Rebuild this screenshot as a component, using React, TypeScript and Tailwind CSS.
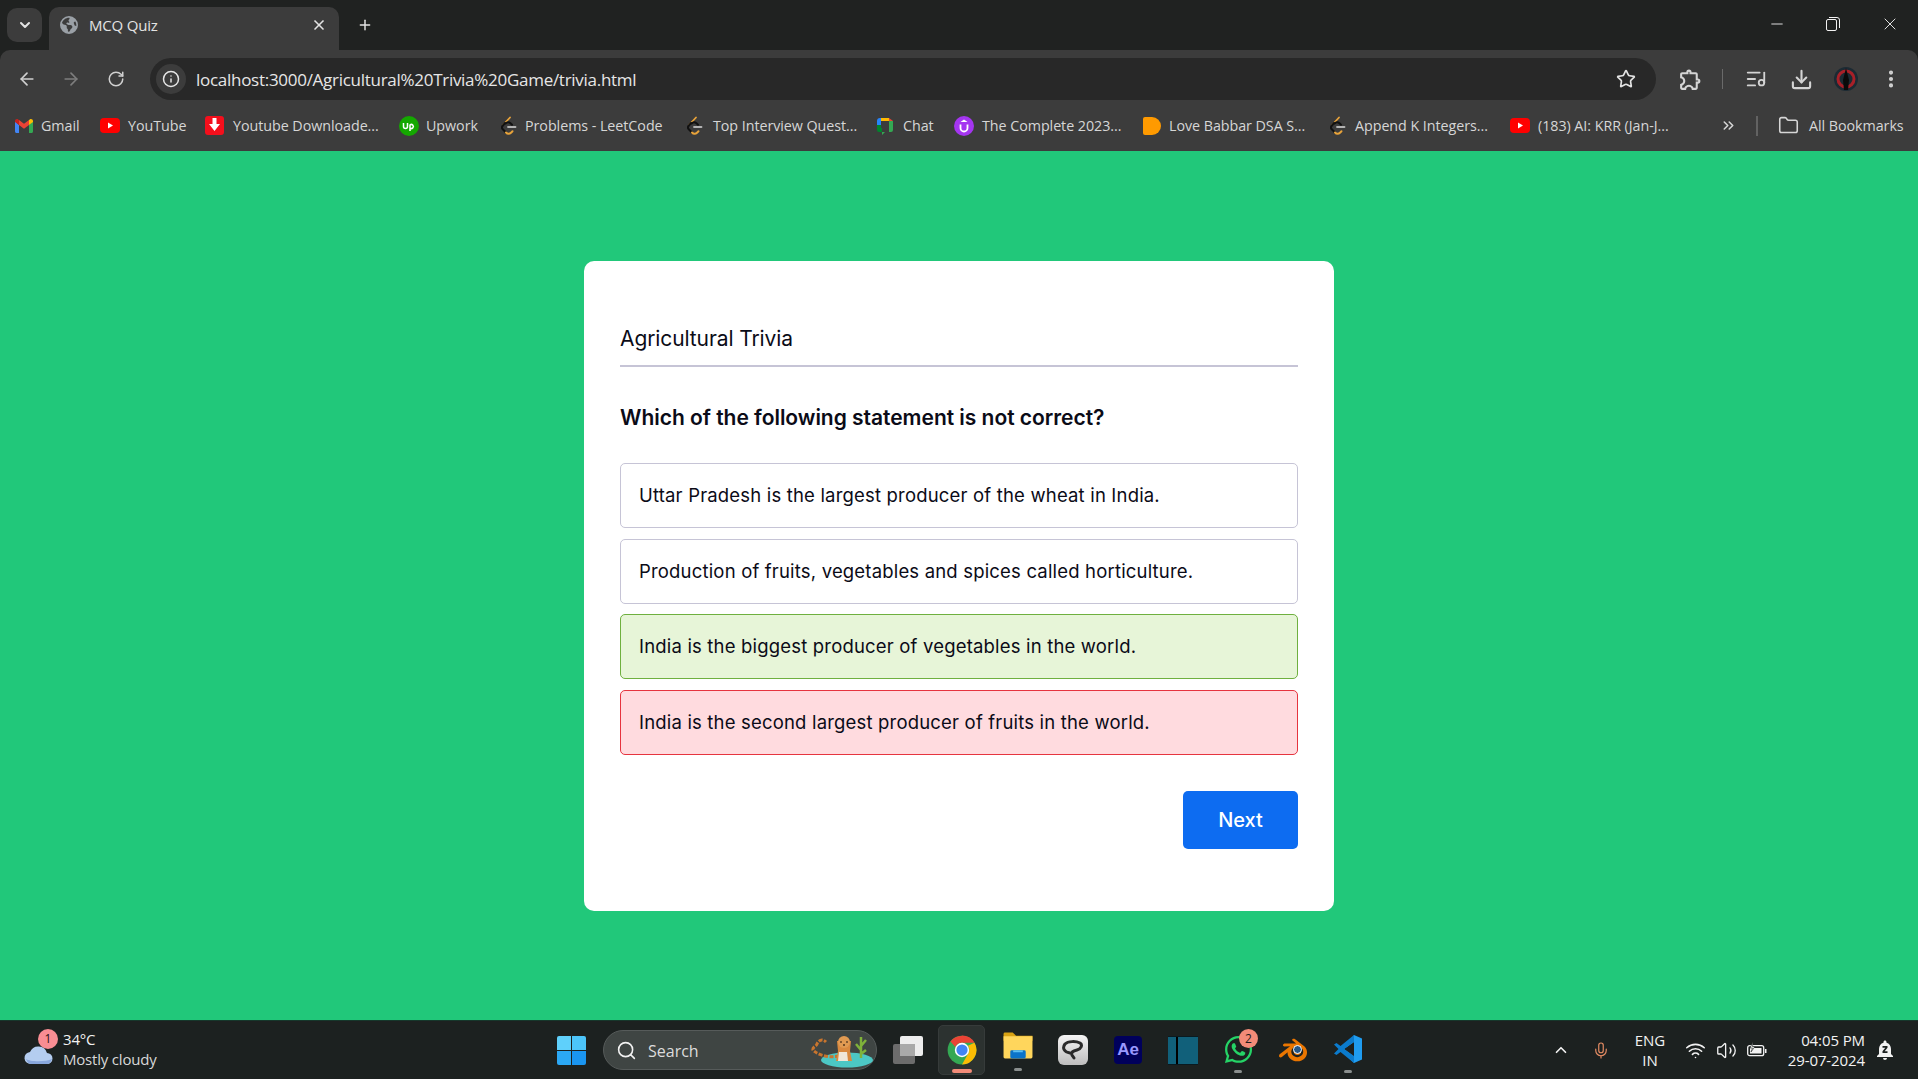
import {
  ArrowLeft,
  ArrowRight,
  ChevronDown,
  ChevronUp,
  ChevronsRight,
  Download,
  EllipsisVertical,
  Folder,
  Info,
  ListMusic,
  Mic,
  Minus,
  Plus,
  RotateCw,
  Search,
  Star,
  Volume2,
  Wifi,
  X,
} from "lucide-react";
import { FaWhatsapp } from "react-icons/fa";
import { FaEarthAmericas } from "react-icons/fa6";
import { MdNotificationsPaused, MdOutlineExtension } from "react-icons/md";
import { SiBlender } from "react-icons/si";

const chromeFont = "font-['Open_Sans','Noto_Sans',sans-serif]";

function GmailIcon() {
  return (
    <svg width="18" height="14" viewBox="0 0 18 14">
      <path d="M0 2v10.5C0 13.3.7 14 1.5 14H4V6z" fill="#4285f4" />
      <path d="M18 2v10.5c0 .8-.7 1.5-1.5 1.5H14V6z" fill="#34a853" />
      <path d="M14 1v5l4-3V2c0-1.800-2-2.500-3.200-1.600z" fill="#fbbc04" />
      <path d="M4 6V1l5 3.800L14 1v5l-5 3.800z" fill="#ea4335" />
      <path d="M0 2v1l4 3V1L3.200.4C2 -.5 0 .2 0 2z" fill="#c5221f" />
    </svg>
  );
}

function YoutubeIcon() {
  return (
    <svg width="20" height="15" viewBox="0 0 20 15">
      <rect width="20" height="15" rx="4" fill="#ff0000" />
      <path d="M8 4.500v6l5-3z" fill="#fff" />
    </svg>
  );
}

function DownloaderIcon() {
  return (
    <svg width="19" height="19" viewBox="0 0 19 19">
      <rect width="19" height="19" rx="3" fill="#f40f1c" />
      <path d="M7.500 2h4v6H15l-5.500 7L4 8h3.500z" fill="#fff" />
    </svg>
  );
}

function UpworkIcon() {
  return (
    <svg width="20" height="20" viewBox="0 0 20 20">
      <circle cx="10" cy="10" r="10" fill="#14a800" />
      <path d="M4.500 7v3.500a2 2 0 0 0 4 0V7M11 15V9a2 2 0 1 1 0 3" fill="none" stroke="#fff" strokeWidth="1.500" />
    </svg>
  );
}

function LeetcodeIcon() {
  return (
    <svg width="16" height="20" viewBox="0 0 16 20">
      <path d="M9 1.500 2 9" fill="none" stroke="#e8a33a" strokeWidth="1.800" strokeLinecap="round" />
      <path d="M4 7 1.500 10c-.8 1 -.8 2 0 3l3.500 3.500" fill="none" stroke="#111" strokeWidth="2" strokeLinecap="round" />
      <path d="M5 16.500c1.500 1.700 3.500 1.700 5 .2l1.500-1.500" fill="none" stroke="#e8a33a" strokeWidth="2" strokeLinecap="round" />
      <path d="M7 11h7.500" stroke="#b3b3b3" strokeWidth="1.800" strokeLinecap="round" />
      <path d="M4.500 7.500c1.500-1.500 3.500-1.500 5-.2l1.500 1.400" fill="none" stroke="#111" strokeWidth="2" strokeLinecap="round" />
    </svg>
  );
}

function ChatIcon() {
  return (
    <svg width="16" height="18" viewBox="0 0 16 18">
      <path d="M0 4h4v4.500L0 8z" fill="#2684fc" />
      <path d="M0 4a3 3 0 0 1 3-3h1v3z" fill="#2684fc" />
      <path d="M4 1h8v3H4z" fill="#ffba00" />
      <path d="M12 1l4 3h-4z" fill="#ea4335" />
      <path d="M12 4h4v9a2 2 0 0 1-2 2H8l-3 3v-3h7z" fill="#34a853" />
      <path d="M0 8h4v3h1v4H2a2 2 0 0 1-2-2z" fill="#00832d" />
    </svg>
  );
}

function UdemyIcon() {
  return (
    <svg width="20" height="20" viewBox="0 0 20 20">
      <circle cx="10" cy="10" r="10" fill="#a435f0" />
      <path d="M6.500 8.500V12a3.500 3.500 0 0 0 7 0V8.500" fill="none" stroke="#fff" strokeWidth="1.800" />
      <path d="M10 3.500 6.500 6h7z" fill="#fff" />
    </svg>
  );
}

function BabbarIcon() {
  return (
    <svg width="18" height="18" viewBox="0 0 18 18">
      <path d="M0 2a2 2 0 0 1 2-2h7a9 9 0 0 1 0 18H2a2 2 0 0 1-2-2z" fill="#ff9a00" />
    </svg>
  );
}

const bookmarks = [
  { icon: <GmailIcon />, label: "Gmail", box: "w-[18px] ml-[15px]", text: "w-[39px] ml-[8px]" },
  { icon: <YoutubeIcon />, label: "YouTube", box: "w-[20px] ml-[20px]", text: "w-[57px] ml-[8px]" },
  { icon: <DownloaderIcon />, label: "Youtube Downloade...", box: "w-[19px] ml-[20px]", text: "w-[146px] ml-[9px]" },
  { icon: <UpworkIcon />, label: "Upwork", box: "w-[20px] ml-[20px]", text: "w-[53px] ml-[7px]" },
  { icon: <LeetcodeIcon />, label: "Problems - LeetCode", box: "w-[16px] ml-[22px]", text: "w-[140px] ml-[8px]" },
  { icon: <LeetcodeIcon />, label: "Top Interview Quest...", box: "w-[16px] ml-[22px]", text: "w-[142px] ml-[10px]" },
  { icon: <ChatIcon />, label: "Chat", box: "w-[16px] ml-[22px]", text: "w-[31px] ml-[10px]" },
  { icon: <UdemyIcon />, label: "The Complete 2023...", box: "w-[20px] ml-[20px]", text: "w-[141px] ml-[8px]" },
  { icon: <BabbarIcon />, label: "Love Babbar DSA S...", box: "w-[18px] ml-[20px]", text: "w-[137px] ml-[8px]" },
  { icon: <LeetcodeIcon />, label: "Append K Integers...", box: "w-[16px] ml-[24px]", text: "w-[135px] ml-[9px]" },
  { icon: <YoutubeIcon />, label: "(183) AI: KRR (Jan-J...", box: "w-[20px] ml-[20px]", text: "w-[138px] ml-[8px]" },
];

const options = [
  { label: "Uttar Pradesh is the largest producer of the wheat in India.", style: "bg-white border-[#c6c4d6]", gap: "mt-[29px]" },
  { label: "Production of fruits, vegetables and spices called horticulture.", style: "bg-white border-[#c6c4d6]", gap: "mt-[11px]" },
  { label: "India is the biggest producer of vegetables in the world.", style: "bg-[#e7f5d8] border-[#6fb03f]", gap: "mt-[10px]" },
  { label: "India is the second largest producer of fruits in the world.", style: "bg-[#ffdbdf] border-[#e6343f]", gap: "mt-[11px]" },
];

function TabStrip() {
  return (
    <div className="h-[50px] flex items-end pl-[7px] shrink-0">
      <div className="h-[34px] w-[35px] mb-[8px] rounded-[10px] bg-[#3c3c3c] flex items-center justify-center">
        <ChevronDown size={16} strokeWidth={3} color="#e3e3e3" />
      </div>
      <div className="h-[43px] w-[290px] ml-[7px] rounded-t-[10px] bg-[#3c3c3c] flex items-center pl-[11px] pr-[12px] pb-[7px]">
        <FaEarthAmericas size={18} color="#9aa0a6" />
        <span className={`${chromeFont} ml-[11px] text-[15px] text-[#e3e3e3] tracking-[-0.2px] flex-1`}>MCQ Quiz</span>
        <X size={16} strokeWidth={2.500} color="#e3e3e3" />
      </div>
      <div className="h-[50px] ml-[18px] w-[16px] flex items-center justify-center">
        <Plus size={18} strokeWidth={2.200} color="#e3e3e3" />
      </div>
      <div className="flex-1" />
      <div className="h-[50px] flex items-center pb-[2px] pr-[18px]">
        <Minus size={18} strokeWidth={1.200} color="#f2f2f2" />
        <svg className="ml-[40px]" width="14" height="14" viewBox="0 0 14 14" fill="none" stroke="#f2f2f2" strokeWidth="1">
          <rect x="0.500" y="2.500" width="10" height="11" rx="1.500" />
          <path d="M3 .5h8a2.500 2.500 0 0 1 2.500 2.500v8" />
        </svg>
        <X className="ml-[40px]" size={20} strokeWidth={1.100} color="#f2f2f2" />
      </div>
    </div>
  );
}

function Toolbar() {
  return (
    <div className="h-[50px] bg-[#3c3c3c] rounded-t-[10px] flex items-end shrink-0">
      <div className="h-[42px] flex items-center pl-[17px] w-[150px] shrink-0">
        <ArrowLeft size={20} color="#d0d0d0" strokeWidth={2} />
        <ArrowRight className="ml-[24px]" size={20} color="#7d7d7d" strokeWidth={2} />
        <RotateCw className="ml-[26px]" size={18} color="#d0d0d0" strokeWidth={2} />
      </div>
      <div className="h-[42px] w-[1506px] rounded-full bg-[#282828] flex items-center pl-[6px] pr-[20px] shrink-0">
        <div className="h-[30px] w-[30px] rounded-full bg-[#3c3c3c] flex items-center justify-center">
          <Info size={18} color="#e6e6e6" strokeWidth={2} />
        </div>
        <span className={`${chromeFont} ml-[10px] pt-[1px] text-[17px] text-[#e6e6e6] tracking-[-0.28px] flex-1`}>
          localhost:3000/Agricultural%20Trivia%20Game/trivia.html
        </span>
        <Star size={20} color="#e3e3e3" strokeWidth={2} />
      </div>
      <div className="h-[42px] flex items-center pl-[22px]">
        <MdOutlineExtension size={25} color="#d4d4d4" />
        <div className="ml-[19px] h-[20px] w-[1px] bg-[#6a6a6a]" />
        <ListMusic className="ml-[22px]" size={22} color="#d4d4d4" strokeWidth={2} />
        <Download className="ml-[23px]" size={23} color="#d4d4d4" strokeWidth={2.200} />
        <div className="ml-[21px] h-[24px] w-[24px] rounded-full bg-[#1c2a33] flex items-center justify-center overflow-hidden">
          <svg width="24" height="24" viewBox="0 0 24 24">
            <circle cx="12" cy="12" r="8" fill="none" stroke="#a82028" strokeWidth="3" />
            <path d="M12 1l3 12-1 10h-4L9 13z" fill="#0a0a0a" />
          </svg>
        </div>
        <EllipsisVertical className="ml-[22px]" size={22} color="#d4d4d4" strokeWidth={2.500} />
      </div>
    </div>
  );
}

function BookmarksBar() {
  return (
    <div className="h-[51px] bg-[#3c3c3c] flex items-center shrink-0">
      {bookmarks.map(b => (
        <div key={b.label} className="flex items-center">
          <div className={`${b.box} flex justify-center`}>{b.icon}</div>
          <span className={`${b.text} ${chromeFont} text-[14.3px] tracking-[-0.05px] text-[#d6d6d6] whitespace-nowrap`}>{b.label}</span>
        </div>
      ))}
      <ChevronsRight className="ml-[44px]" size={17} strokeWidth={2.200} color="#d6d6d6" />
      <div className="ml-[19px] h-[20px] w-[2px] bg-[#626262]" />
      <Folder className="ml-[20px]" size={21} strokeWidth={1.800} color="#d6d6d6" />
      <span className={`${chromeFont} ml-[10px] text-[14.3px] tracking-[-0.05px] text-[#d6d6d6] whitespace-nowrap`}>All Bookmarks</span>
    </div>
  );
}

function QuizCard() {
  return (
    <div className="w-[750px] h-[650px] bg-white rounded-[10px] px-[36px] pt-[62px] font-['Inter',sans-serif] text-[#0b0b17]">
      <h2 className="text-[21px] leading-[32px] pb-[10px] border-b-2 border-[#c6c4d6] tracking-[-0.1px]">Agricultural Trivia</h2>
      <h3 className="mt-[35px] text-[21px] leading-[32px] font-semibold tracking-[-0.03px]">Which of the following statement is not correct?</h3>
      {options.map(o => (
        <div key={o.label} className={`${o.gap} ${o.style} h-[65px] rounded-[5px] border flex items-center pl-[18px] text-[18.5px] tracking-[0.18px]`}>
          {o.label}
        </div>
      ))}
      <div className="mt-[36px] flex justify-end">
        <button className="w-[115px] h-[58px] rounded-[5px] bg-[#0d6cf1] text-white text-[20px] font-medium">Next</button>
      </div>
    </div>
  );
}

function ChromeLogo() {
  return (
    <svg width="30" height="30" viewBox="0 0 48 48">
      <circle cx="24" cy="24" r="23" fill="#34a853" />
      <path d="M24 1a23 23 0 0 1 20 11.500H24A11.500 11.500 0 0 0 13.500 19L5.500 10.500A23 23 0 0 1 24 1z" fill="#ea4335" />
      <path d="M44 12.500A23 23 0 0 1 24 47l10-17.500A11.500 11.500 0 0 0 33.500 17z" fill="#fbbc04" />
      <circle cx="24" cy="24" r="11.500" fill="#fff" />
      <circle cx="24" cy="24" r="9" fill="#4285f4" />
    </svg>
  );
}

function VsCodeLogo() {
  return (
    <svg width="30" height="30" viewBox="0 0 30 30">
      <path d="M21 1 29 4.500v21L21 29 8 16.500l5-3.500z" fill="#1f9cf0" />
      <path d="M21 8 11 15l10 7.500z" fill="#1c2120" />
      <path d="M21 1 7.500 12 3.500 9 1 10.500 5.500 15 1 19.500 3.500 21l4-3L21 29V22L11 15 21 8z" fill="#0b7bcc" />
    </svg>
  );
}

function ExplorerLogo() {
  return (
    <svg width="30" height="28" viewBox="0 0 30 28">
      <path d="M0 2a1.500 1.500 0 0 1 1.500-1.500h8L13 4h17v5H0z" fill="#d8a213" />
      <path d="M0 4.500h30V26a1.500 1.500 0 0 1-1.500 1.500h-27A1.500 1.500 0 0 1 0 26z" fill="#ffd65c" />
      <rect x="7" y="19" width="16" height="8.500" rx="1.500" fill="#0a73c9" />
      <rect x="10" y="19" width="10" height="2" fill="#5cc0f2" />
    </svg>
  );
}

function TigerBadge() {
  return (
    <svg width="62" height="36" viewBox="0 0 62 36">
      <ellipse cx="36" cy="28" rx="26" ry="7.500" fill="#4cc7c4" />
      <path d="M28 24C14 27 3 20 2 18c-1-3 3-3 4-6 1-3 5-6 9-2" fill="none" stroke="#c8752e" strokeWidth="3" strokeDasharray="4 1.500" />
      <path d="M26 9h14l-1 10 2 10H25l2-10z" fill="#d9893f" />
      <path d="M28 20h8l1 9h-10z" fill="#f0e6d8" />
      <circle cx="33" cy="10" r="6" fill="#e09a52" />
      <path d="M29 10h2M35 10h2M33 12v2" stroke="#2f1d10" strokeWidth="1.200" />
      <path d="M50 26V5M50 18l-5-6M50 14l5-6M50 22l5-4" stroke="#7fb23a" strokeWidth="2.500" fill="none" />
    </svg>
  );
}

function Dot() {
  return <div className="mt-[2px] w-[8px] h-[3px] rounded-full bg-[#8a8f8e]" />;
}

function Taskbar() {
  return (
    <div className="h-[59px] bg-[#1c2120] border-t border-[#16372b] flex items-center shrink-0 font-['Open_Sans',sans-serif] text-[#f2f2f2]">
      <div className="relative w-[32px] ml-[23px] h-[30px] flex items-end">
        <svg width="31" height="22" viewBox="0 0 31 22">
          <path d="M8 21a6 6 0 0 1-1-12 9 9 0 0 1 17 1 5.500 5.500 0 0 1 0 11z" fill="#b4cdf0" />
          <path d="M3 16c4 3 20 3 26 0-1 3-3 5-5 5H8c-2 0-4-2-5-5z" fill="#88a7dc" />
        </svg>
        <div className="absolute -top-[6px] left-[15px] w-[20px] h-[20px] rounded-full bg-[#f98d93] text-[#2a1214] text-[12px] flex items-center justify-center">1</div>
      </div>
      <div className="ml-[8px] -mt-[2px] w-[110px] leading-[20px] text-[15px] tracking-[-0.2px]">
        <div>34°C</div>
        <div className="text-[#d8d8d8]">Mostly cloudy</div>
      </div>
      <div className="ml-[384px] w-[29px] h-[29px] grid grid-cols-2 gap-[1px]">
        <div className="rounded-tl-[2px] bg-[#5fd0fb]" />
        <div className="rounded-tr-[2px] bg-[#4cc5fa]" />
        <div className="rounded-bl-[2px] bg-[#2ba8f5]" />
        <div className="rounded-br-[2px] bg-[#1a95f0]" />
      </div>
      <div className="ml-[17px] w-[274px] h-[40px] rounded-full bg-[#3f4543] border border-[#565b5a] flex items-center pl-[12px] pr-[3px]">
        <Search size={21} color="#f2f2f2" strokeWidth={1.800} />
        <span className="ml-[11px] pt-[1px] text-[16px] text-[#dcdcdc] flex-1">Search</span>
        <TigerBadge />
      </div>
      <div className="ml-[16px] relative w-[30px] h-[28px]">
        <div className="w-[22px] h-[20px] mt-[8px] rounded-[2px] bg-[#6c6c6c]" />
        <div className="absolute top-0 left-[7px] w-[23px] h-[20px] rounded-[2px] bg-[#ededed]" />
        <div className="absolute top-[8px] left-[7px] w-[15px] h-[12px] bg-[#a9a9a9]" />
      </div>
      <div className="ml-[15px] w-[47px] h-[50px] rounded-[5px] bg-[#2c3230] border border-[#363b3a] flex flex-col items-center pt-[9px] relative">
        <ChromeLogo />
        <div className="absolute bottom-[1px] w-[20px] h-[4px] rounded-full bg-[#f28b78]" />
      </div>
      <div className="ml-[18px] w-[30px] flex flex-col items-center h-[42px] pt-[3px]">
        <ExplorerLogo />
        <div className="mt-[7px]"><Dot /></div>
      </div>
      <div className="ml-[25px] w-[30px] h-[30px] rounded-[6px] bg-gradient-to-b from-[#f5f5f5] to-[#bdbdbd] flex items-center justify-center">
        <svg width="24" height="22" viewBox="0 0 24 22" fill="none" stroke="#2a2a2a" strokeWidth="3" strokeLinecap="round">
          <path d="M9 14C3 13 1 9 4 5c3-3 11-3 15-1 3 2 1 6-3 7-4 1-6 2-5 5l2 3" />
        </svg>
      </div>
      <div className="ml-[26px] w-[28px] h-[28px] rounded-[4px] bg-[#00005b] flex items-center justify-center text-[#9999ff] text-[17px] font-semibold font-['Liberation_Sans',sans-serif]">Ae</div>
      <div className="ml-[26px] w-[30px] h-[29px] bg-[#11607a] border-y border-[#0a1a20] flex">
        <div className="ml-[8px] w-[2px] bg-black" />
      </div>
      <div className="ml-[25px] w-[30px] relative h-[42px] flex flex-col items-center pt-[5px]">
        <FaWhatsapp size={31} color="#25d366" />
        <div className="absolute -top-[0px] left-[16px] w-[19px] h-[19px] rounded-full bg-[#f28b78] text-[#1c1c1c] text-[12px] flex items-center justify-center">2</div>
        <div className="absolute bottom-[-2px]"><Dot /></div>
      </div>
      <div className="ml-[26px] w-[28px] relative flex items-center justify-center">
        <SiBlender size={30} color="#ea7600" />
        <div className="absolute left-[14px] top-[10px] w-[9px] h-[9px] rounded-full bg-[#265787] border border-white" />
      </div>
      <div className="ml-[26px] w-[30px] h-[42px] flex flex-col items-center pt-[5px] relative">
        <VsCodeLogo />
        <div className="absolute bottom-[-2px]"><Dot /></div>
      </div>
      <div className="ml-[189px] w-[18px] flex justify-center">
        <ChevronUp size={22} strokeWidth={2.200} color="#f2f2f2" />
      </div>
      <div className="ml-[22px] w-[18px] flex justify-center">
        <Mic size={21} strokeWidth={1.600} color="#e38b63" />
      </div>
      <div className="ml-[21px] w-[38px] text-center text-[15px] leading-[20px]">
        <div>ENG</div>
        <div>IN</div>
      </div>
      <Wifi className="ml-[16px]" size={21} strokeWidth={1.800} color="#f2f2f2" />
      <Volume2 className="ml-[10px]" size={21} strokeWidth={1.500} color="#f2f2f2" />
      <svg className="ml-[10px]" width="20" height="16" viewBox="0 0 20 16">
        <rect x="0.700" y="3.700" width="16" height="10" rx="2" fill="none" stroke="#f2f2f2" strokeWidth="1.300" />
        <rect x="3" y="6" width="11.500" height="5.500" fill="#f2f2f2" />
        <rect x="18" y="7" width="1.500" height="4" fill="#f2f2f2" />
        <path d="M6 0 3 6h2.500L4 10l4-5.500H5.500z" fill="#f2f2f2" stroke="#1c2120" strokeWidth="0.600" />
      </svg>
      <div className="ml-[10px] w-[88px] text-right text-[15px] leading-[20px] tracking-[-0.1px]">
        <div>04:05 PM</div>
        <div>29-07-2024</div>
      </div>
      <MdNotificationsPaused className="ml-[8px]" size={24} color="#f2f2f2" />
    </div>
  );
}

export default function App() {
  return (
    <div className="h-screen w-full flex flex-col overflow-hidden bg-[#202221]">
      <TabStrip />
      <Toolbar />
      <BookmarksBar />
      <main className="flex-1 flex justify-center pt-[110px] min-h-0 bg-[#21c87a]">
        <QuizCard />
      </main>
      <Taskbar />
    </div>
  );
}
